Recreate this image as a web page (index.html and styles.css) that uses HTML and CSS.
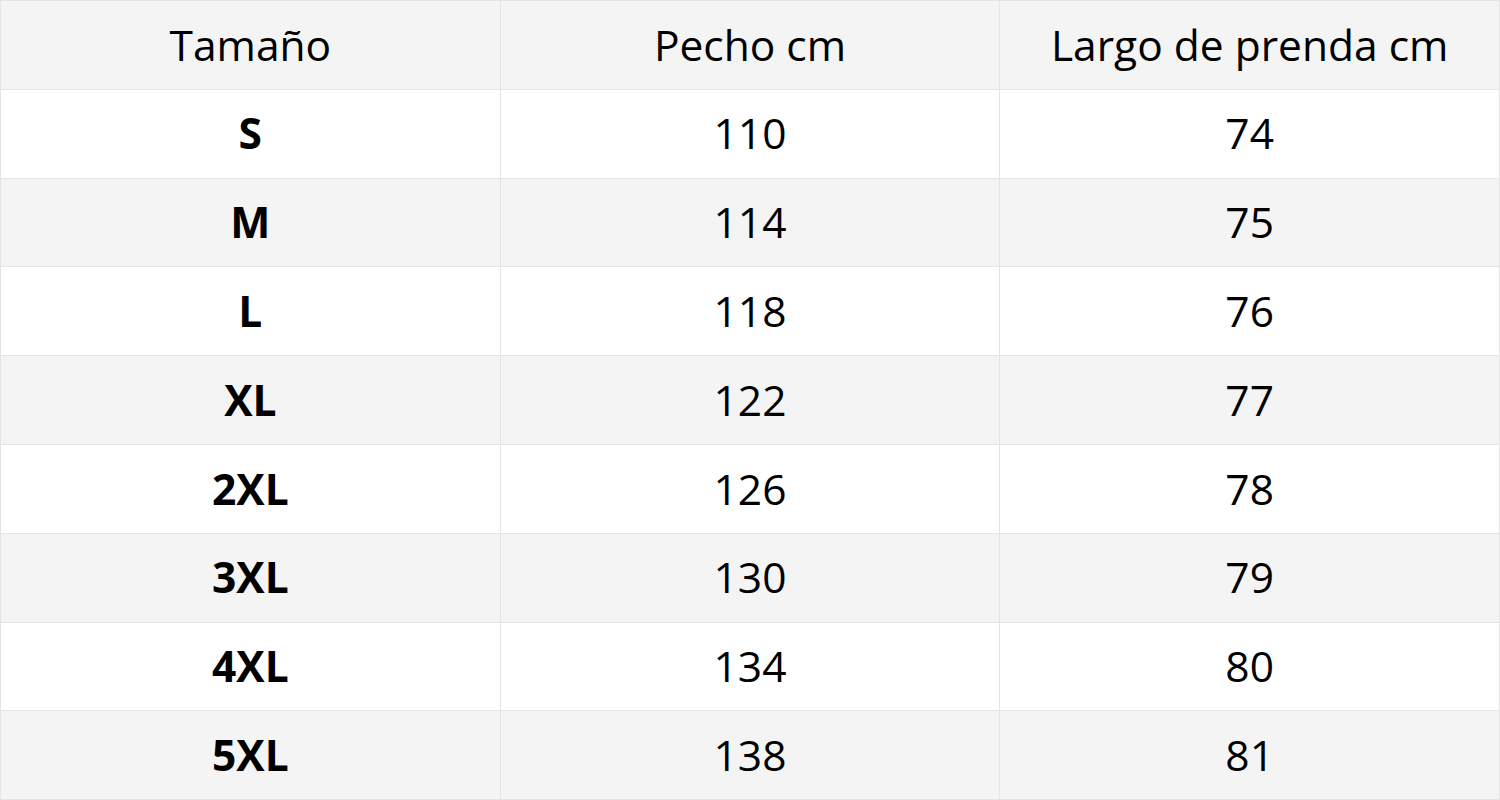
FILE: index.html
```html
<!DOCTYPE html>
<html lang="es">
<head>
<meta charset="utf-8">
<link rel="stylesheet" href="styles.css">
</head>
<body>
<table class="size-table">
  <thead>
    <tr><th>Tamaño</th><th>Pecho cm</th><th>Largo de prenda cm</th></tr>
  </thead>
  <tbody>
    <tr><td class="size">S</td><td>110</td><td>74</td></tr>
    <tr><td class="size">M</td><td>114</td><td>75</td></tr>
    <tr><td class="size">L</td><td>118</td><td>76</td></tr>
    <tr><td class="size">XL</td><td>122</td><td>77</td></tr>
    <tr><td class="size">2XL</td><td>126</td><td>78</td></tr>
    <tr><td class="size">3XL</td><td>130</td><td>79</td></tr>
    <tr><td class="size">4XL</td><td>134</td><td>80</td></tr>
    <tr><td class="size">5XL</td><td>138</td><td>81</td></tr>
  </tbody>
</table>
</body>
</html>
```
FILE: styles.css
```css
html, body {
  margin: 0;
  padding: 0;
  background: #ffffff;
}
.size-table {
  width: 1500px;
  border-collapse: collapse;
  table-layout: fixed;
  font-family: "Open Sans", "Liberation Sans", sans-serif;
  font-size: 42.5px;
  color: #000;
}
.size-table th,
.size-table td {
  border: 1px solid #e4e4e4;
  height: 87.8px;
  padding: 0;
  text-align: center;
  vertical-align: middle;
  font-weight: 400;
  line-height: 1;
}
.size-table thead tr,
.size-table tbody tr:nth-child(even) {
  background: #f4f4f4;
}
.size-table td.size {
  font-weight: 700;
}
```
